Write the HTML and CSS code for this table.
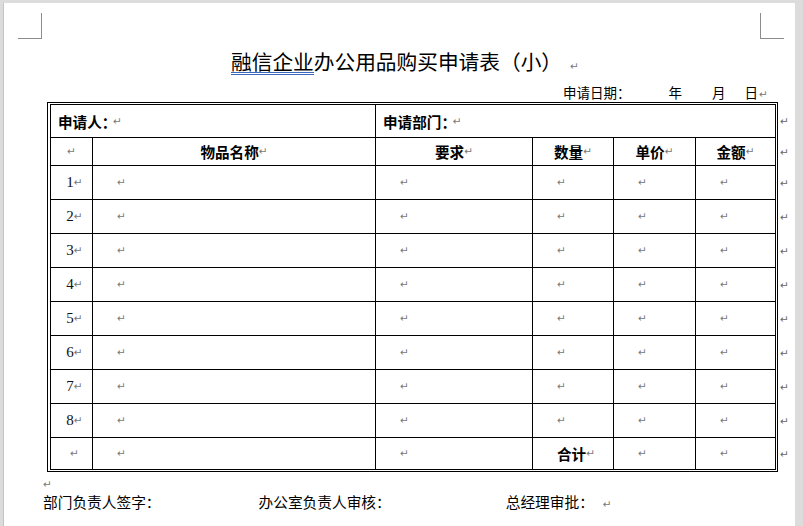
FILE: index.html
```html
<!DOCTYPE html>
<html lang="zh-CN">
<head>
<meta charset="utf-8">
<title>融信企业办公用品购买申请表（小）</title>
<link rel="stylesheet" href="styles.css">
</head>
<body>
<div class="page">
  <div class="crop crop-l"></div>
  <div class="crop crop-r"></div>

  <div class="title"><span class="sp">融信企业</span>办公用品购买申请表（小）<span class="m mt">↵</span></div>

  <div class="date">
    <span class="d-label">申请日期：</span>
    <span class="d-y">年</span>
    <span class="d-m">月</span>
    <span class="d-d">日</span><span class="m">↵</span>
  </div>

  <div class="tablerow">
    <div class="frame">
      <div class="tbl">
        <div class="c span2 pl7"><b>申请人<span class="halt">：</span></b><span class="m ml4">↵</span></div>
        <div class="c span4 pl8"><b>申请部门<span class="halt">：</span></b><span class="m ml4">↵</span></div>

        <div class="c ctr"><span class="m">↵</span></div>
        <div class="c ctr"><b>物品名称</b><span class="m">↵</span></div>
        <div class="c ctr"><b>要求</b><span class="m">↵</span></div>
        <div class="c ctr"><b>数量</b><span class="m">↵</span></div>
        <div class="c ctr"><b>单价</b><span class="m">↵</span></div>
        <div class="c ctr"><b>金额</b><span class="m">↵</span></div>

        <div class="c ctr num">1<span class="m">↵</span></div>
        <div class="c pl24"><span class="m">↵</span></div>
        <div class="c pl24"><span class="m">↵</span></div>
        <div class="c pl24"><span class="m">↵</span></div>
        <div class="c pl24"><span class="m">↵</span></div>
        <div class="c pl24"><span class="m">↵</span></div>

        <div class="c ctr num">2<span class="m">↵</span></div>
        <div class="c pl24"><span class="m">↵</span></div>
        <div class="c pl24"><span class="m">↵</span></div>
        <div class="c pl24"><span class="m">↵</span></div>
        <div class="c pl24"><span class="m">↵</span></div>
        <div class="c pl24"><span class="m">↵</span></div>

        <div class="c ctr num">3<span class="m">↵</span></div>
        <div class="c pl24"><span class="m">↵</span></div>
        <div class="c pl24"><span class="m">↵</span></div>
        <div class="c pl24"><span class="m">↵</span></div>
        <div class="c pl24"><span class="m">↵</span></div>
        <div class="c pl24"><span class="m">↵</span></div>

        <div class="c ctr num">4<span class="m">↵</span></div>
        <div class="c pl24"><span class="m">↵</span></div>
        <div class="c pl24"><span class="m">↵</span></div>
        <div class="c pl24"><span class="m">↵</span></div>
        <div class="c pl24"><span class="m">↵</span></div>
        <div class="c pl24"><span class="m">↵</span></div>

        <div class="c ctr num">5<span class="m">↵</span></div>
        <div class="c pl24"><span class="m">↵</span></div>
        <div class="c pl24"><span class="m">↵</span></div>
        <div class="c pl24"><span class="m">↵</span></div>
        <div class="c pl24"><span class="m">↵</span></div>
        <div class="c pl24"><span class="m">↵</span></div>

        <div class="c ctr num">6<span class="m">↵</span></div>
        <div class="c pl24"><span class="m">↵</span></div>
        <div class="c pl24"><span class="m">↵</span></div>
        <div class="c pl24"><span class="m">↵</span></div>
        <div class="c pl24"><span class="m">↵</span></div>
        <div class="c pl24"><span class="m">↵</span></div>

        <div class="c ctr num">7<span class="m">↵</span></div>
        <div class="c pl24"><span class="m">↵</span></div>
        <div class="c pl24"><span class="m">↵</span></div>
        <div class="c pl24"><span class="m">↵</span></div>
        <div class="c pl24"><span class="m">↵</span></div>
        <div class="c pl24"><span class="m">↵</span></div>

        <div class="c ctr num">8<span class="m">↵</span></div>
        <div class="c pl24"><span class="m">↵</span></div>
        <div class="c pl24"><span class="m">↵</span></div>
        <div class="c pl24"><span class="m">↵</span></div>
        <div class="c pl24"><span class="m">↵</span></div>
        <div class="c pl24"><span class="m">↵</span></div>

        <div class="c ctr num"><span class="m">↵</span></div>
        <div class="c pl24"><span class="m">↵</span></div>
        <div class="c pl24"><span class="m">↵</span></div>
        <div class="c pl24"><b>合计</b><span class="m">↵</span></div>
        <div class="c pl24"><span class="m">↵</span></div>
        <div class="c pl24"><span class="m">↵</span></div>
      </div>
    </div>
    <div class="rowmarks">
      <div class="rm h33"><span class="m">↵</span></div>
      <div class="rm h28"><span class="m">↵</span></div>
      <div class="rm h34"><span class="m">↵</span></div>
      <div class="rm h34"><span class="m">↵</span></div>
      <div class="rm h34"><span class="m">↵</span></div>
      <div class="rm h34"><span class="m">↵</span></div>
      <div class="rm h34"><span class="m">↵</span></div>
      <div class="rm h34"><span class="m">↵</span></div>
      <div class="rm h34"><span class="m">↵</span></div>
      <div class="rm h34"><span class="m">↵</span></div>
      <div class="rm h32"><span class="m">↵</span></div>
    </div>
  </div>

  <div class="blank"><span class="m">↵</span></div>

  <div class="sign">
    <span class="s1">部门负责人签字：</span>
    <span class="s2">办公室负责人审核：</span>
    <span class="s3">总经理审批：</span><span class="m">↵</span>
  </div>
</div>
</body>
</html>
```

FILE: styles.css
```css
html, body {
  margin: 0;
  padding: 0;
}
body {
  background: #dcdcdc;
  width: 803px;
  height: 526px;
  overflow: hidden;
  font-family: "Noto Sans CJK SC", "Noto Sans", sans-serif;
  color: #000;
}
.page {
  position: relative;
  background: #fff;
  margin: 3px 0 0 4px;
  width: 791px;
  height: 523px;
  box-shadow: -1px 0 0 #c4c4c4;
  padding-left: 39px;
  box-sizing: border-box;
  overflow: hidden;
}
.crop {
  position: absolute;
  top: 10px;
  height: 26px;
  width: 24px;
  box-sizing: border-box;
  border-bottom: 1px solid #8c8c8c;
}
.crop-l {
  left: 14px;
  border-right: 1px solid #8c8c8c;
}
.crop-r {
  left: 756px;
  border-left: 1px solid #8c8c8c;
}

.m {
  font-family: "DejaVu Sans", sans-serif;
  font-size: 10.5px;
  font-weight: normal;
  color: #777;
  line-height: 1;
}
.ml4 { margin-left: 4px; }

.title {
  margin-top: 46px;
  padding-left: 188px;
  font-size: 20.7px;
  line-height: 24px;
  height: 24px;
  white-space: nowrap;
}
.title .mt { margin-left: 8px; }
.sp {
  background-image:
    linear-gradient(#3b68bd, #3b68bd),
    linear-gradient(#3b68bd, #3b68bd);
  background-repeat: no-repeat;
  background-size: 100% 1px, 100% 1px;
  background-position: 0 calc(100% - 1px), 0 calc(100% - 3px);
}

.date {
  margin-top: 10px;
  height: 18px;
  line-height: 18px;
  font-size: 13.5px;
  display: flex;
  align-items: baseline;
  padding-left: 520px;
  white-space: nowrap;
}
.d-y { margin-left: 38px; }
.d-m { margin-left: 30px; }
.d-d { margin-left: 19px; }
.date .m { margin-left: 1px; }

.tablerow {
  display: flex;
  align-items: flex-start;
  margin-top: 1px;
  margin-left: 4px;
}
.frame {
  flex: none;
  border: 1px solid #000;
  padding: 1px 1px 1px 2px;
}
.tbl {
  display: grid;
  grid-template-columns: 42px 283px 157px 81px 82px 80px;
  grid-template-rows: 33px 28px repeat(8, 34px) 32px;
  border-top: 1px solid #000;
  border-left: 1px solid #000;
}
.c {
  border-right: 1px solid #000;
  border-bottom: 1px solid #000;
  box-sizing: border-box;
  display: flex;
  align-items: center;
  font-size: 14.6px;
  white-space: nowrap;
}
.c b { font-weight: 700; }
.span2 { grid-column: span 2; }
.span4 { grid-column: span 4; }
.pl7 { padding-left: 7px; }
.pl8 { padding-left: 7px; }
.pl24 { padding-left: 24px; }
.ctr { justify-content: center; }
.num {
  font-family: "Liberation Serif", serif;
  font-size: 15px;
  padding-left: 6px;
  color: #111;
}
.halt { font-feature-settings: "halt"; }

.rowmarks {
  flex: none;
  width: 12px;
  margin-left: 2px;
  padding-top: 3px;
  display: flex;
  flex-direction: column;
}
.rm {
  display: flex;
  align-items: center;
}
.rm .m { color: #666; }
.h33 { height: 33px; }
.h28 { height: 28px; }
.h34 { height: 34px; }
.h32 { height: 32px; }

.blank {
  margin-top: 3px;
  height: 12px;
  line-height: 12px;
}
.sign {
  margin-top: 5px;
  font-size: 14.7px;
  line-height: 20px;
  height: 20px;
  display: flex;
  align-items: baseline;
  white-space: nowrap;
}
.s2 { margin-left: 98px; }
.s3 { margin-left: 115px; }
.sign .m { margin-left: 9px; }
```
